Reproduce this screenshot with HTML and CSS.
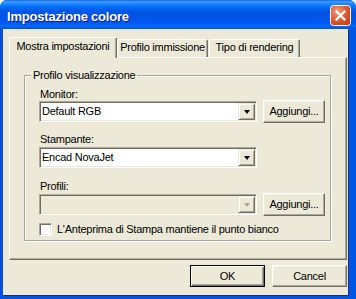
FILE: index.html
```html
<!DOCTYPE html>
<html>
<head>
<meta charset="utf-8">
<link rel="stylesheet" href="styles.css">
</head>
<body>
<div class="window">
  <div class="titlebar">
    <span class="title">Impostazione colore</span>
    <span class="close">
      <svg width="21" height="21" viewBox="0 0 21 21">
        <defs>
          <radialGradient id="cg" cx="35%" cy="30%" r="85%">
            <stop offset="0" stop-color="#F0A386"/>
            <stop offset="0.45" stop-color="#E2603A"/>
            <stop offset="1" stop-color="#C13A12"/>
          </radialGradient>
        </defs>
        <rect x="0.5" y="0.5" width="20" height="20" rx="3" fill="url(#cg)" stroke="#fff"/>
        <path d="M6.5 6.5 L14.5 14.5 M14.5 6.5 L6.5 14.5" stroke="#fff" stroke-width="2.2" stroke-linecap="square"/>
      </svg>
    </span>
  </div>
  <div class="frame">
    <div class="client">
      <div class="tabs">
        <div class="tab sel w1">Mostra impostazioni</div>
        <div class="tab w2">Profilo immissione</div>
        <div class="tab w3">Tipo di rendering</div>
      </div>
      <div class="panel">
        <div class="group">
          <div class="legend">Profilo visualizzazione</div>
          <div class="label l-monitor">Monitor:</div>
          <div class="row">
            <div class="combo"><span class="val">Default RGB</span><span class="drop"><span class="tri"></span></span></div>
            <button class="btn add">Aggiungi...</button>
          </div>
          <div class="label l-stamp">Stampante:</div>
          <div class="row r-stamp">
            <div class="combo"><span class="val">Encad NovaJet</span><span class="drop"><span class="tri"></span></span></div>
          </div>
          <div class="label l-prof">Profili:</div>
          <div class="row r-prof">
            <div class="combo disabled"><span class="val"></span><span class="drop"><span class="tri"></span></span></div>
            <button class="btn add">Aggiungi...</button>
          </div>
          <div class="check-row">
            <span class="check"></span>
            <span class="check-label">L'Anteprima di Stampa mantiene il punto bianco</span>
          </div>
        </div>
      </div>
      <div class="buttons">
        <button class="btn dlg default">OK</button>
        <button class="btn dlg">Cancel</button>
      </div>
    </div>
  </div>
</div>
</body>
</html>
```

FILE: styles.css
```css
* { box-sizing: border-box; }
body {
  margin: 0;
  background: #ffffff;
  font-family: "Liberation Sans", Arial, sans-serif;
  font-size: 11px;
  letter-spacing: -0.25px;
  color: #000;
}
.window {
  width: 356px;
  height: 299px;
  background: #0055E5;
  border-radius: 7px 7px 0 0;
  overflow: hidden;
  display: flex;
  flex-direction: column;
}
.titlebar {
  height: 29px;
  flex: none;
  display: flex;
  align-items: center;
  padding: 2px 0 0 7px;
  background: linear-gradient(to bottom,
    #0058EE 0px, #3A93FF 1px, #3D95FF 2px, #288EFF 3px, #127DFF 5px,
    #036FFC 7px, #0262EE 9px, #0057E5 11px, #0054E3 14px, #0055EB 20px,
    #005BF5 24px, #026AFE 26px, #0062EF 27px, #0052D6 29px);
}
.title {
  flex: 1;
  color: #fff;
  font-weight: bold;
  font-size: 13px;
  letter-spacing: -0.2px;
  line-height: 15px;
  margin-top: 1px;
  text-shadow: 1px 1px 0 #0A1A8A;
}
.close {
  width: 21px;
  height: 21px;
  margin-right: 5px;
  display: block;
}
.close svg { display: block; }
.frame {
  flex: 1;
  display: flex;
  padding-left: 3px;
  background: linear-gradient(to right, #0047D6 0, #0055E5 2px);
}
.client {
  width: 345px;
  height: 266px;
  background: #ECE9D8;
  box-shadow: 1px 1px 0 #1B2C78;
  display: flex;
  flex-direction: column;
}
/* Tabs */
.tabs {
  display: flex;
  align-items: flex-end;
  height: 20px;
  margin: 8px 0 0 6px;
  position: relative;
  z-index: 1;
}
.tab {
  height: 18px;
  border: 1px solid;
  border-color: #fff #716F64 transparent #fff;
  border-bottom: 0;
  border-radius: 2px 2px 0 0;
  box-shadow: inset -1px 0 0 #ACA899;
  display: flex;
  justify-content: center;
  align-items: flex-start;
  padding-top: 1px;
  line-height: 13px;
  white-space: nowrap;
  background: #ECE9D8;
}
.tab.sel {
  height: 21px;
  margin-bottom: -1px;
  padding-top: 2px;
}
.w1 { width: 108px; }
.w2 { width: 91px; }
.w3 { width: 91px; margin-left: 1px; }
/* Panel */
.panel {
  margin-left: 6px;
  width: 338px;
  height: 203px;
  border: 1px solid;
  border-color: #fff #716F64 #716F64 #fff;
  box-shadow: inset -1px -1px 0 #ACA899;
  padding: 17px 0 0 14px;
}
.group {
  width: 307px;
  height: 166px;
  border: 1px solid #ACA899;
  box-shadow: inset 1px 1px 0 #fff, 1px 1px 0 #fff;
  padding: 0 0 0 14px;
  display: flex;
  flex-direction: column;
  align-items: flex-start;
}
.legend {
  margin: -7px 0 0 -8px;
  padding: 0 2px;
  line-height: 13px;
  background: #ECE9D8;
}
.label { line-height: 12px; padding-left: 1px; }
.l-monitor { margin-top: 6px; }
.l-stamp { margin-top: 10px; }
.l-prof { margin-top: 12px; }
.row {
  display: flex;
  align-items: center;
  gap: 6px;
  height: 23px;
}
.r-stamp { height: 21px; margin-top: 2px; }
.r-prof { margin-top: 1px; }
.combo {
  width: 218px;
  height: 21px;
  border: 1px solid;
  border-color: #ACA899 #fff #fff #ACA899;
  box-shadow: inset 1px 1px 0 #716F64, inset -1px -1px 0 #ECE9D8;
  background: #fff;
  display: flex;
  align-items: center;
  padding: 1px 1px 1px 2px;
}
.combo.disabled { background: #ECE9D8; }
.val { flex: 1; line-height: 13px; white-space: nowrap; }
.drop {
  width: 17px;
  height: 17px;
  border: 1px solid;
  border-color: #ECE9D8 #716F64 #716F64 #ECE9D8;
  box-shadow: inset 1px 1px 0 #fff, inset -1px -1px 0 #ACA899;
  background: #ECE9D8;
  display: flex;
  align-items: center;
  justify-content: center;
}
.tri {
  width: 0;
  height: 0;
  border-left: 3.5px solid transparent;
  border-right: 3.5px solid transparent;
  border-top: 4px solid #000;
  margin-top: 1px;
}
.disabled .tri { border-top-color: #ACA899; }
.btn {
  font-family: "Liberation Sans", Arial, sans-serif;
  font-size: 11px;
  letter-spacing: -0.25px;
  color: #000;
  background: #ECE9D8;
  border: 1px solid;
  border-color: #fff #716F64 #716F64 #fff;
  box-shadow: inset -1px -1px 0 #ACA899, inset 1px 1px 0 #F1EFE2;
  padding: 0;
  margin: 0;
  line-height: 13px;
}
.add { width: 62px; height: 23px; }
.check-row {
  display: flex;
  align-items: center;
  margin-top: 7px;
  height: 13px;
}
.check {
  width: 13px;
  height: 13px;
  border: 1px solid;
  border-color: #ACA899 #fff #fff #ACA899;
  box-shadow: inset 1px 1px 0 #716F64, inset -1px -1px 0 #F1EFE2;
  background: #fff;
}
.check-label { margin-left: 5px; line-height: 13px; white-space: nowrap; }
/* Dialog buttons */
.buttons {
  display: flex;
  justify-content: flex-end;
  gap: 7px;
  margin-top: 5px;
  padding-right: 1px;
}
.dlg { width: 75px; height: 22px; }
.btn.default {
  border: 1px solid #000;
  box-shadow: inset 1px 1px 0 #fff, inset -1px -1px 0 #716F64, inset -2px -2px 0 #ACA899;
}
```
